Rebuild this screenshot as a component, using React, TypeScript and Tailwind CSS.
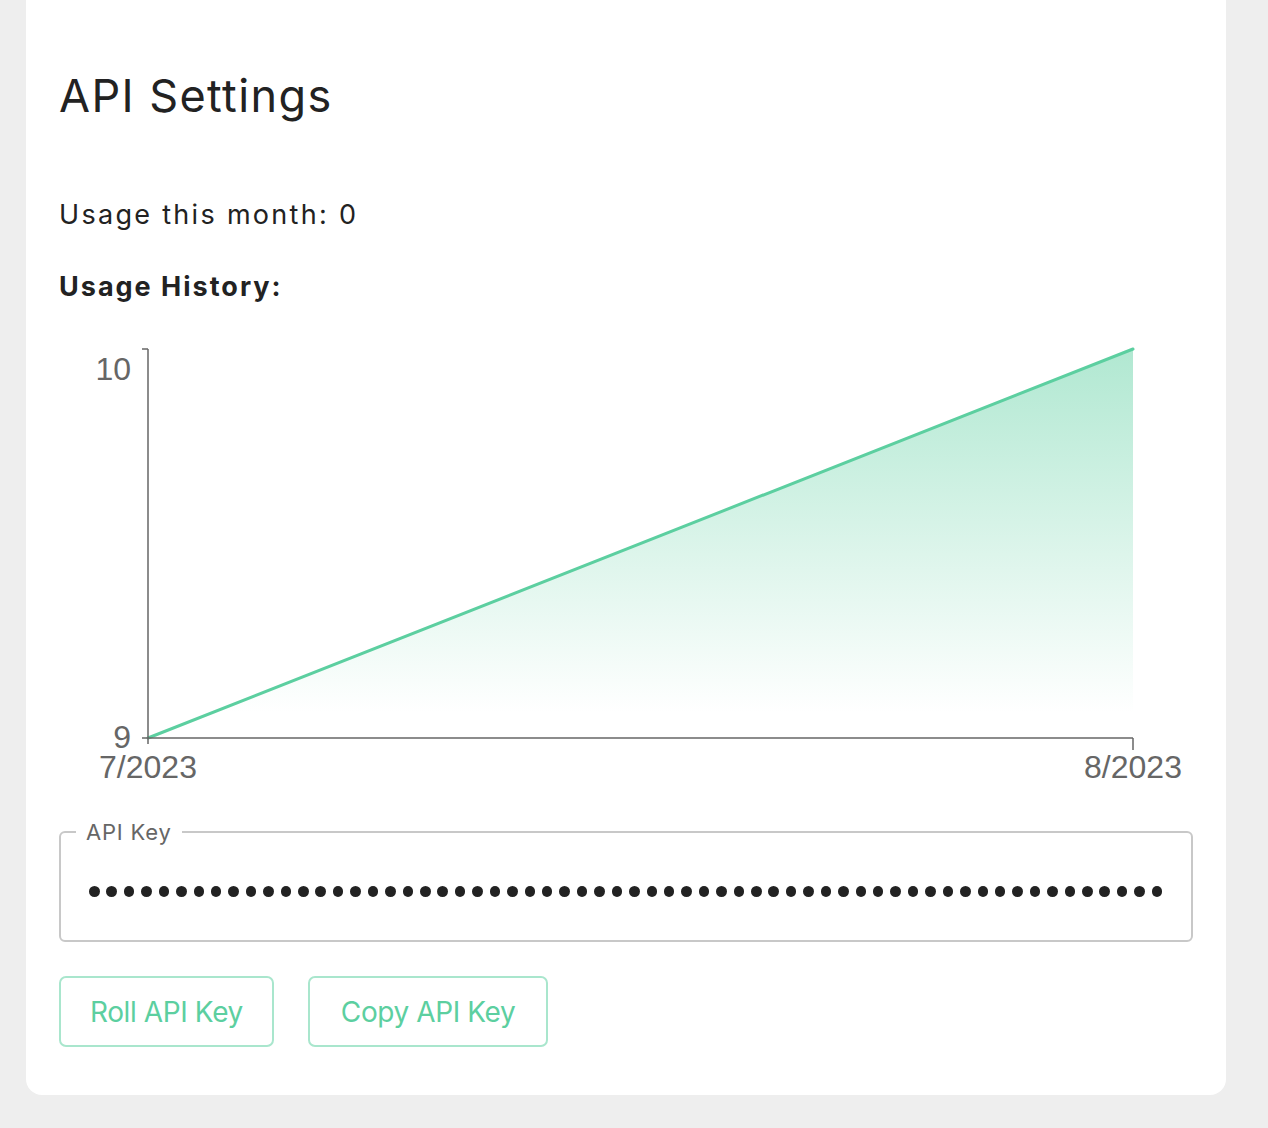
import React from "react";

const dots = Array.from({ length: 62 });

function UsageChart() {
  // axis box inside the svg: x 89..1074, y 46..435
  return (
    <svg width="1134" height="497" viewBox="0 0 1134 497" className="mt-[1px] block">
      <defs>
        <linearGradient id="usageFill" x1="0" y1="46" x2="0" y2="410" gradientUnits="userSpaceOnUse">
          <stop offset="0" stopColor="#5ccfa0" stopOpacity="0.48" />
          <stop offset="1" stopColor="#5ccfa0" stopOpacity="0" />
        </linearGradient>
      </defs>
      <polygon points="89,435 1074,46 1074,435" fill="url(#usageFill)" />
      <line x1="89" y1="435" x2="1074" y2="46" stroke="#5ccfa0" strokeWidth="3" strokeLinecap="round" />
      <g stroke="#666" strokeWidth="1.5" fill="none">
        <line x1="89" y1="46" x2="89" y2="435" />
        <line x1="83" y1="46" x2="89" y2="46" />
        <line x1="83" y1="435" x2="89" y2="435" />
        <line x1="89" y1="435" x2="1074" y2="435" />
        <line x1="89" y1="435" x2="89" y2="441" />
        <line x1="1074" y1="435" x2="1074" y2="447" />
      </g>
      <g fill="#666" fontSize="32" fontFamily="'Liberation Sans', Arial, sans-serif">
        <text x="72" y="77" textAnchor="end">10</text>
        <text x="72" y="445" textAnchor="end">9</text>
        <text x="89" y="475" textAnchor="middle">7/2023</text>
        <text x="1074" y="475" textAnchor="middle">8/2023</text>
      </g>
    </svg>
  );
}

export default function App() {
  return (
    <div className="min-h-[1128px] bg-[#eeeeee] font-['Inter',sans-serif] text-[#222]">
      <div className="ml-[26px] w-[1200px] rounded-b-2xl bg-white px-[33px] pt-[70px] pb-[48px]">
        <h1 className="text-[45px] leading-[52px] font-normal tracking-[1.4px]">API Settings</h1>

        <p className="mt-[77px] text-[27px] leading-[32px] tracking-[2.3px]">Usage this month: 0</p>

        <h2 className="mt-[41px] text-[27px] leading-[30px] font-bold tracking-[2px]">Usage History:</h2>

        <UsageChart />

        <fieldset className="mt-[20px] h-[122px] rounded-[6px] border-2 border-[#c8c8c8] pl-[15px] pr-[28px]">
          <legend className="px-[10px] text-[22px] leading-[24px] text-[#666] tracking-[0.8px]">API Key</legend>
          <div className="mt-[42px] ml-[13px] flex justify-between">
            {dots.map((_, i) => (
              <span key={i} className="h-[10.5px] w-[10.5px] rounded-full bg-[#222]" />
            ))}
          </div>
        </fieldset>

        <div className="mt-[34px] flex gap-[34px]">
          <button className="h-[71px] rounded-[7px] border-2 border-[#a9e6cd] px-[29px] text-[28px] text-[#5ccfa0] tracking-[-0.4px]">
            Roll API Key
          </button>
          <button className="h-[71px] rounded-[7px] border-2 border-[#a9e6cd] px-[31px] text-[28px] text-[#5ccfa0] tracking-[-0.4px]">
            Copy API Key
          </button>
        </div>
      </div>
    </div>
  );
}
